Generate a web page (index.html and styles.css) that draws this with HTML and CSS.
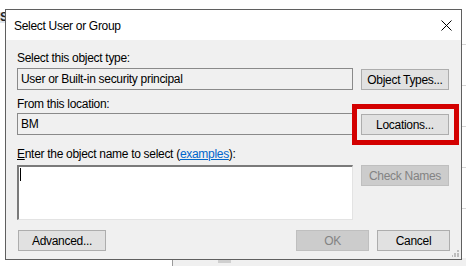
FILE: index.html
```html
<!DOCTYPE html>
<html lang="en">
<head>
    <meta charset="UTF-8">
    <title>Select User or Group</title>
    <link rel="stylesheet" href="styles.css">
</head>
<body>
    <div class="desktop">
        <!-- window behind the dialog -->
        <div class="back-window">
            <span class="back-letter">S</span>
        </div>
        <div class="back-panel">
            <span class="back-mark"></span>
        </div>
        <div class="back-lines">
            <i></i><i></i><i></i><i></i><i></i>
        </div>

        <div class="dialog">
            <div class="titlebar">
                <span class="title">Select User or Group</span>
                <span class="close">
                    <svg width="11" height="11" viewBox="0 0 11 11">
                        <path d="M0.5 0.5 L10.5 10.5 M10.5 0.5 L0.5 10.5" stroke="#000" stroke-width="1" fill="none"/>
                    </svg>
                </span>
            </div>

            <div class="content">
                <div class="label label-first">Select this object type:</div>
                <div class="row">
                    <div class="field">User or Built-in security principal</div>
                    <button class="btn">Object Types...</button>
                </div>

                <div class="label label-second">From this location:</div>
                <div class="row">
                    <div class="field">BM</div>
                    <button class="btn">Locations...</button>
                </div>

                <div class="label label-third"><u>E</u>nter the object name to select (<a class="link" href="#">examples</a>):</div>
                <div class="row">
                    <div class="textarea"><span class="caret"></span></div>
                    <button class="btn" disabled>Check Names</button>
                </div>

                <div class="footer">
                    <button class="btn btn-advanced">Advanced...</button>
                    <div class="footer-right">
                        <button class="btn btn-small" disabled>OK</button>
                        <button class="btn btn-small">Cancel</button>
                    </div>
                </div>
            </div>

            <div class="highlight"></div>
            <div class="grip">
                <svg width="7" height="7" viewBox="0 0 7 7">
                    <rect x="5" y="0" width="2" height="2" fill="#bdbdbd"/>
                    <rect x="2" y="3" width="2" height="2" fill="#bdbdbd"/>
                    <rect x="5" y="3" width="2" height="2" fill="#bdbdbd"/>
                    <rect x="0" y="5" width="1" height="2" fill="#bdbdbd"/>
                    <rect x="2" y="5" width="2" height="2" fill="#bdbdbd"/>
                    <rect x="5" y="5" width="2" height="2" fill="#bdbdbd"/>
                </svg>
            </div>
        </div>
    </div>
</body>
</html>
```

FILE: styles.css
```css
body {
    margin: 0;
    background-color: #fff;
    font-family: "Liberation Sans", Arial, sans-serif;
    font-size: 12px;
    letter-spacing: -0.3px;
    color: #000;
}
.desktop {
    position: relative;
    width: 466px;
    height: 266px;
    overflow: hidden;
}
.back-window {
    position: absolute;
    left: 0;
    top: 12px;
    width: 8px;
    height: 11px;
    overflow: hidden;
    background-color: #dde4ec;
}
.back-letter {
    display: block;
    font-weight: bold;
    font-size: 12px;
    line-height: 11px;
    color: #222;
}
.back-panel {
    position: absolute;
    left: 172px;
    top: 258px;
    width: 300px;
    height: 10px;
    background-color: #f0f0f0;
    border-left: 1px solid #9a9a9a;
}
.back-mark {
    position: absolute;
    left: 45px;
    top: 2px;
    width: 13px;
    height: 3px;
    background-color: #cfcfcf;
}
.back-lines {
    position: absolute;
    left: 462px;
    top: 0;
    width: 4px;
    height: 266px;
}
.back-lines i {
    display: block;
    height: 1px;
    background-color: #d6d6d6;
    margin-top: 40px;
}
.back-lines i:first-child {
    margin-top: 44px;
}

/* dialog window */
.dialog {
    position: absolute;
    z-index: 1;
    left: 5px;
    top: 9px;
    width: 457px;
    height: 251px;
    box-sizing: border-box;
    border: 1px solid #5f5f5f;
    background-color: #f0f0f0;
}
.titlebar {
    height: 30px;
    background-color: #fff;
    display: flex;
    align-items: center;
    justify-content: space-between;
    padding: 0 9px 0 8px;
}
.title {
    padding-top: 1px;
}
.close {
    display: flex;
    padding-top: 1px;
}
.content {
    padding: 0 11px;
    display: flex;
    flex-direction: column;
}
.label {
    height: 16px;
    line-height: 16px;
}
.label-first {
    margin-top: 10px;
    margin-bottom: 2px;
}
.label-second {
    margin-top: 6px;
    margin-bottom: 1px;
}
.label-third {
    margin-top: 11px;
    margin-bottom: 3px;
}
.link {
    color: #0066cc;
}
.row {
    display: flex;
    gap: 8px;
    align-items: flex-start;
}
.field {
    width: 336px;
    height: 22px;
    box-sizing: border-box;
    border: 1px solid #8a8a8a;
    background-color: #f0f0f0;
    padding-left: 3px;
    line-height: 20px;
}
.textarea {
    width: 336px;
    height: 55px;
    box-sizing: border-box;
    background-color: #fff;
    border: 1px solid;
    border-color: #7a7a7a #e3e3e3 #e3e3e3 #7a7a7a;
    border-top-width: 2px;
    border-left-width: 2px;
    padding: 1px 0 0 1px;
}
.caret {
    display: block;
    width: 1px;
    height: 13px;
    background-color: #000;
}
.btn {
    width: 88px;
    height: 21px;
    margin-top: 1px;
    box-sizing: border-box;
    border: 1px solid #adadad;
    background-color: #e1e1e1;
    font-family: inherit;
    font-size: 12px;
    letter-spacing: -0.3px;
    color: #000;
    padding: 0;
}
.btn:disabled {
    background-color: #cccccc;
    border-color: #bfbfbf;
    color: #838383;
}
.row .btn[disabled] {
    margin-top: 0;
}
.footer {
    margin-top: 10px;
    display: flex;
    justify-content: space-between;
}
.btn-advanced {
    margin-top: 0;
    margin-left: 1px;
}
.footer-right {
    display: flex;
    gap: 8px;
}
.btn-small {
    width: 73px;
    margin-top: 0;
}

/* red annotation drawn over the dialog */
.highlight {
    position: absolute;
    left: 346px;
    top: 94px;
    width: 107px;
    height: 41px;
    box-sizing: border-box;
    border: 5px solid #d30000;
}
.grip {
    position: absolute;
    right: 2px;
    bottom: 2px;
    display: flex;
}
```
